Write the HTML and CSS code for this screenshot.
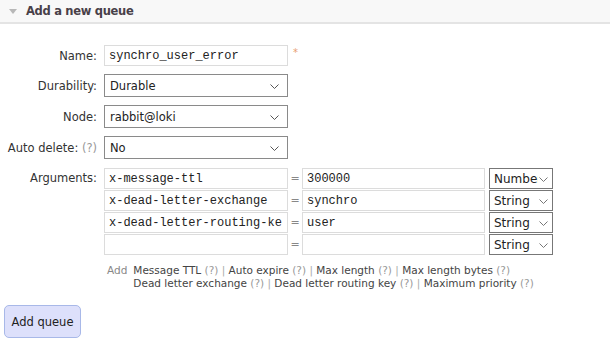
FILE: index.html
```html
<!DOCTYPE html>
<html lang="en">
<head>
    <meta charset="UTF-8">
    <title>Add a new queue</title>
    <link rel="stylesheet" href="styles.css">
</head>
<body>
    <div class="section">
        <h2 class="section-title"><span class="arrow"></span>Add a new queue</h2>
        <form class="queue-form">
            <div class="form-row">
                <label class="field-label">Name:</label>
                <div class="field">
                    <input type="text" class="text-input mono" value="synchro_user_error">
                    <span class="mand">*</span>
                </div>
            </div>
            <div class="form-row">
                <label class="field-label">Durability:</label>
                <div class="select-wrap wide">
                    <select class="select"><option>Durable</option></select>
                    <svg class="chev" width="9" height="6" viewBox="0 0 9 6"><path d="M0.5 0.5 L4.5 4.5 L8.5 0.5" fill="none" stroke="#555" stroke-width="1"/></svg>
                </div>
            </div>
            <div class="form-row">
                <label class="field-label">Node:</label>
                <div class="select-wrap wide">
                    <select class="select"><option>rabbit@loki</option></select>
                    <svg class="chev" width="9" height="6" viewBox="0 0 9 6"><path d="M0.5 0.5 L4.5 4.5 L8.5 0.5" fill="none" stroke="#555" stroke-width="1"/></svg>
                </div>
            </div>
            <div class="form-row">
                <label class="field-label">Auto delete: <span class="help">(?)</span></label>
                <div class="select-wrap wide">
                    <select class="select"><option>No</option></select>
                    <svg class="chev" width="9" height="6" viewBox="0 0 9 6"><path d="M0.5 0.5 L4.5 4.5 L8.5 0.5" fill="none" stroke="#555" stroke-width="1"/></svg>
                </div>
            </div>
            <div class="form-row args-row">
                <label class="field-label">Arguments:</label>
                <div class="args">
                    <div class="arg">
                        <input type="text" class="text-input mono key" value="x-message-ttl">
                        <span class="eq">=</span>
                        <input type="text" class="text-input mono val" value="300000">
                        <div class="select-wrap type">
                            <select class="select"><option>Number</option></select>
                            <svg class="chev" width="9" height="6" viewBox="0 0 9 6"><path d="M0.5 0.5 L4.5 4.5 L8.5 0.5" fill="none" stroke="#777" stroke-width="1"/></svg>
                        </div>
                    </div>
                    <div class="arg">
                        <input type="text" class="text-input mono key" value="x-dead-letter-exchange">
                        <span class="eq">=</span>
                        <input type="text" class="text-input mono val" value="synchro">
                        <div class="select-wrap type">
                            <select class="select"><option>String</option></select>
                            <svg class="chev" width="9" height="6" viewBox="0 0 9 6"><path d="M0.5 0.5 L4.5 4.5 L8.5 0.5" fill="none" stroke="#777" stroke-width="1"/></svg>
                        </div>
                    </div>
                    <div class="arg">
                        <input type="text" class="text-input mono key" value="x-dead-letter-routing-ke">
                        <span class="eq">=</span>
                        <input type="text" class="text-input mono val" value="user">
                        <div class="select-wrap type">
                            <select class="select"><option>String</option></select>
                            <svg class="chev" width="9" height="6" viewBox="0 0 9 6"><path d="M0.5 0.5 L4.5 4.5 L8.5 0.5" fill="none" stroke="#777" stroke-width="1"/></svg>
                        </div>
                    </div>
                    <div class="arg">
                        <input type="text" class="text-input mono key" value="">
                        <span class="eq">=</span>
                        <input type="text" class="text-input mono val" value="">
                        <div class="select-wrap type">
                            <select class="select"><option>String</option></select>
                            <svg class="chev" width="9" height="6" viewBox="0 0 9 6"><path d="M0.5 0.5 L4.5 4.5 L8.5 0.5" fill="none" stroke="#777" stroke-width="1"/></svg>
                        </div>
                    </div>
                    <div class="add-links">
                        <span class="add-word">Add</span>
                        <div class="links">
                            <span class="link">Message TTL</span> <span class="help">(?)</span> <span class="sep">|</span>
                            <span class="link">Auto expire</span> <span class="help">(?)</span> <span class="sep">|</span>
                            <span class="link">Max length</span> <span class="help">(?)</span> <span class="sep">|</span>
                            <span class="link">Max length bytes</span> <span class="help">(?)</span><br>
                            <span class="link">Dead letter exchange</span> <span class="help">(?)</span> <span class="sep">|</span>
                            <span class="link">Dead letter routing key</span> <span class="help">(?)</span> <span class="sep">|</span>
                            <span class="link">Maximum priority</span> <span class="help">(?)</span>
                        </div>
                    </div>
                </div>
            </div>
            <button type="button" class="add-button">Add queue</button>
        </form>
    </div>
</body>
</html>
```

FILE: styles.css
```css
body {
    margin: 0;
    font-family: "DejaVu Sans", Verdana, sans-serif;
    font-size: 11px;
    color: #222;
    background-color: #ffffff;
}

.section {
    width: 610px;
}

.section-title {
    margin: 0;
    height: 22px;
    display: flex;
    align-items: center;
    gap: 9px;
    padding-left: 9px;
    background-color: #f8f8f8;
    border-bottom: 2px solid #e4e4e4;
    font-size: 11.5px;
    letter-spacing: -0.3px;
    font-weight: bold;
    color: #484048;
}

.arrow {
    width: 0;
    height: 0;
    border-left: 4px solid transparent;
    border-right: 4px solid transparent;
    border-top: 5px solid #b8b8b8;
}

.queue-form {
    display: flex;
    flex-direction: column;
    padding-top: 21px;
}

.form-row {
    display: grid;
    grid-template-columns: 97px auto;
    justify-items: start;
    column-gap: 7px;
    align-items: center;
    margin-bottom: 8px;
}

.field-label {
    justify-self: end;
    text-align: right;
    font-size: 11.5px;
    color: #333;
}

.args-row {
    align-items: start;
    margin-top: 1px;
}

.args-row .field-label {
    padding-top: 3px;
}

.help {
    color: #999;
}

.field {
    display: flex;
    align-items: flex-start;
    gap: 5px;
}

.mand {
    color: #e8a070;
    font-size: 10px;
    line-height: 10px;
    padding-top: 3px;
}

.text-input {
    box-sizing: border-box;
    height: 21px;
    width: 184px;
    border: 1px solid #dcdcdc;
    padding: 0 4px;
    margin: 0;
    color: #222;
    background: #fff;
}

.mono {
    font-family: "Liberation Mono", "Courier New", monospace;
    font-size: 12px;
}

.select-wrap {
    position: relative;
    display: inline-block;
}

.select {
    appearance: none;
    -webkit-appearance: none;
    box-sizing: border-box;
    margin: 0;
    border: 1px solid #8a8a8a;
    background: #fff;
    font-family: "DejaVu Sans", Verdana, sans-serif;
    font-size: 11.5px;
    color: #222;
    padding: 0 20px 0 5px;
    display: block;
}

.wide .select {
    width: 184px;
    height: 23px;
}

.chev {
    position: absolute;
    top: 50%;
    right: 9px;
    margin-top: -2px;
    pointer-events: none;
}

.args {
    display: flex;
    flex-direction: column;
    gap: 1px;
}

.arg {
    display: flex;
    align-items: center;
}

.key {
    width: 184px;
    height: 21px;
}

.eq {
    width: 14px;
    text-align: center;
    color: #888;
    font-size: 11px;
}

.val {
    width: 183px;
    height: 21px;
}

.type {
    margin-left: 4px;
}

.type .select {
    width: 64px;
    height: 21px;
    padding: 0 14px 0 4px;
    font-size: 12px;
    border-color: #777;
}

.type .chev {
    right: 5px;
}

.add-links {
    display: flex;
    gap: 6px;
    margin-top: 8px;
    padding-left: 3px;
    font-size: 10.5px;
    line-height: 12.5px;
}

.add-word {
    color: #888;
}

.link {
    color: #444;
}

.sep {
    color: #aaa;
}

.add-button {
    align-self: flex-start;
    margin: 8px 0 0 4px;
    width: 77px;
    height: 33px;
    background-color: #dde0fb;
    border: 1px solid #a8b8e8;
    border-radius: 5px;
    font-family: "DejaVu Sans", Verdana, sans-serif;
    font-size: 11.5px;
    color: #222;
}
```
